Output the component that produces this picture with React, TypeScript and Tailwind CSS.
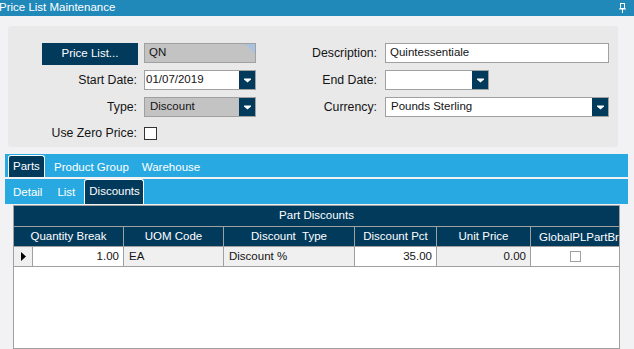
import React from 'react';

const navy = 'bg-[#023a5c]';

const DropButton = () => (
  <span className={`flex h-full w-[16px] shrink-0 items-center justify-center ${navy}`}>
    <svg width="7" height="5" viewBox="0 0 7 5">
      <path d="M0 0.5h7v1L3.5 4.5 0 1.5z" fill="#fff" />
    </svg>
  </span>
);

const PinIcon = () => (
  <svg width="8" height="10" viewBox="0 0 8 10" className="text-white">
    <rect x="1.5" y="0.5" width="4" height="5" fill="none" stroke="currentColor" />
    <line x1="0" y1="6" x2="7" y2="6" stroke="currentColor" />
    <line x1="3.5" y1="6" x2="3.5" y2="10" stroke="currentColor" />
  </svg>
);

const columns = [
  { title: 'Quantity Break', width: 'w-[110px]' },
  { title: 'UOM Code', width: 'w-[100px]' },
  { title: 'Discount  Type', width: 'w-[131px]' },
  { title: 'Discount Pct', width: 'w-[82px]' },
  { title: 'Unit Price', width: 'w-[94px]' },
];

const App = () => {
  return (
    <div className="flex h-[349px] w-full flex-col overflow-hidden bg-[#f2f2f4] font-['Liberation_Sans',Arial,sans-serif] text-[11.5px] text-[#141414]">
      {/* title bar */}
      <div className="flex h-[16px] shrink-0 items-center justify-between bg-[#2089b9] pr-[7px]">
        <span className="ml-[-1px] leading-none text-white">Price List Maintenance</span>
        <PinIcon />
      </div>

      {/* header panel */}
      <div className="mx-[8px] mt-[10px] flex w-[610px] flex-col rounded-[3px] bg-[#e9e9e9] pt-[17px] pb-[7px]">
        <div className="flex items-start">
          <div className="flex w-[130px] justify-end">
            <button className={`h-[22px] w-[96px] ${navy} text-white`}>Price List...</button>
          </div>
          <div className="relative ml-[6px] flex h-[20px] w-[112px] items-center border border-[#a0a0a0] bg-[#c3c3c3] pl-[4px]">
            QN
            <svg width="10" height="10" viewBox="0 0 10 10" className="absolute top-0 right-0">
              <path d="M0 0h10v10z" fill="#a9c3df" />
            </svg>
          </div>
          <div className="flex h-[20px] w-[121px] items-center justify-end text-[12.3px]">Description:</div>
          <div className="ml-[8px] flex h-[20px] w-[224px] items-center border border-[#a0a0a0] bg-white pl-[4px]">
            Quintessentiale
          </div>
        </div>

        <div className="mt-[5px] flex h-[20px] items-center">
          <div className="w-[129px] text-right text-[12.3px]">Start Date:</div>
          <div className="ml-[7px] flex h-full w-[112px] items-center border border-[#a0a0a0] bg-white">
            <span className="flex-1 pl-[1px]">01/07/2019</span>
            <DropButton />
          </div>
          <div className="w-[121px] text-right text-[12.3px]">End Date:</div>
          <div className="ml-[8px] flex h-full w-[104px] items-center border border-[#a0a0a0] bg-white">
            <span className="flex-1" />
            <DropButton />
          </div>
        </div>

        <div className="mt-[7px] flex h-[20px] items-center">
          <div className="w-[129px] text-right text-[12.3px]">Type:</div>
          <div className="ml-[7px] flex h-full w-[112px] items-center border border-[#a0a0a0] bg-[#c3c3c3]">
            <span className="flex-1 pl-[5px]">Discount</span>
            <DropButton />
          </div>
          <div className="w-[121px] text-right text-[12.3px]">Currency:</div>
          <div className="ml-[8px] flex h-full w-[224px] items-center border border-[#a0a0a0] bg-white">
            <span className="flex-1 pl-[5px]">Pounds Sterling</span>
            <DropButton />
          </div>
        </div>

        <div className="mt-[10px] flex h-[13px] items-center">
          <div className="w-[129px] text-right text-[12.3px]">Use Zero Price:</div>
          <span className="ml-[7px] h-[13px] w-[13px] border border-[#333] bg-white" />
        </div>
      </div>

      {/* tab rows */}
      <div className="mt-[7px] ml-[5px] flex h-[23px] w-[623px] shrink-0 items-stretch bg-[#29a9e1] text-white">
        <div className={`mt-[1px] ml-[3px] flex w-[37px] items-center rounded-t-[3px] border border-b-0 border-white ${navy} pl-[4px]`}>
          Parts
        </div>
        <div className="ml-[9px] flex items-center pt-[4px]">Product Group</div>
        <div className="ml-[13px] flex items-center pt-[4px]">Warehouse</div>
      </div>
      <div className="mt-[2px] ml-[5px] flex h-[25px] w-[623px] shrink-0 items-stretch bg-[#29a9e1] text-white">
        <div className="ml-[8px] flex items-center pt-[3px]">Detail</div>
        <div className="ml-[15px] flex items-center pt-[3px]">List</div>
        <div className={`ml-[9px] flex w-[60px] items-center rounded-t-[3px] border border-b-0 border-white ${navy} pl-[4px]`}>
          Discounts
        </div>
      </div>

      {/* grid */}
      <div className="mt-[1px] ml-[13px] flex w-[607px] flex-1 flex-col border border-[#a0a0a0] bg-white">
        <div className={`flex h-[21px] shrink-0 items-center justify-center border-b border-[#a0a0a0] ${navy} text-white`}>
          Part Discounts
        </div>
        <div className={`flex h-[20px] shrink-0 border-b border-[#a0a0a0] ${navy} text-white`}>
          {columns.map((c) => (
            <div key={c.title} className={`${c.width} flex shrink-0 items-center justify-center whitespace-pre border-r border-[#a0a0a0]`}>
              {c.title}
            </div>
          ))}
          <div className="flex-1 overflow-hidden whitespace-nowrap pl-[8px] leading-[20px]">GlobalPLPartBrk</div>
        </div>
        <div className="flex h-[20px] shrink-0 border-b border-[#a0a0a0]">
          <div className="flex w-[19px] shrink-0 items-center justify-center border-r border-[#a0a0a0] bg-[#f0f0f0]">
            <svg width="5" height="9" viewBox="0 0 5 9">
              <path d="M0 0l5 4.5L0 9z" fill="#000" />
            </svg>
          </div>
          <div className="flex w-[91px] shrink-0 items-center justify-end border-r border-[#a0a0a0] bg-white pr-[4px]">1.00</div>
          <div className="flex w-[100px] shrink-0 items-center border-r border-[#a0a0a0] bg-[#f0f0f0] pl-[5px]">EA</div>
          <div className="flex w-[131px] shrink-0 items-center border-r border-[#a0a0a0] bg-[#f0f0f0] pl-[5px]">Discount %</div>
          <div className="flex w-[82px] shrink-0 items-center justify-end border-r border-[#a0a0a0] bg-white pr-[4px]">35.00</div>
          <div className="flex w-[94px] shrink-0 items-center justify-end border-r border-[#a0a0a0] bg-[#f0f0f0] pr-[4px]">0.00</div>
          <div className="flex flex-1 items-center justify-center bg-white">
            <span className="h-[11px] w-[11px] border border-[#a0a0a0] bg-white" />
          </div>
        </div>
      </div>
    </div>
  );
};

export default App;
